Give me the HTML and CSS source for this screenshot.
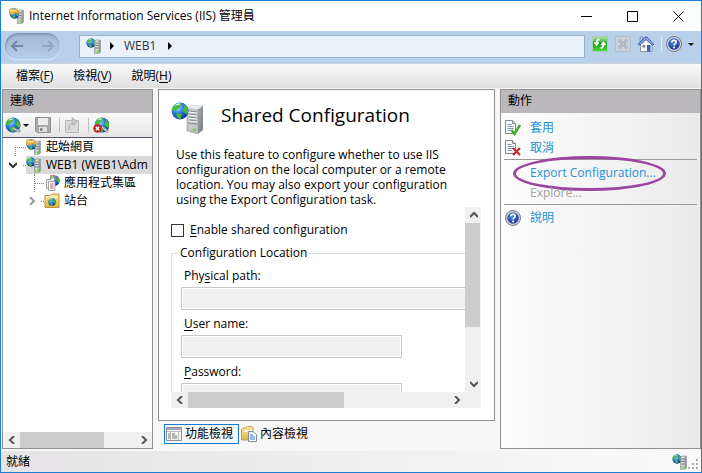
FILE: index.html
```html
<!DOCTYPE html>
<html lang="zh-Hant">
<head>
<meta charset="utf-8">
<title>Internet Information Services (IIS) 管理員</title>
<link rel="stylesheet" href="styles.css">
</head>
<body>
<svg class="defs" aria-hidden="true">
  <defs>
    <linearGradient id="tower" x1="0" x2="1"><stop offset="0" stop-color="#9da3a6"/><stop offset=".4" stop-color="#e4e6e6"/><stop offset="1" stop-color="#8c9295"/></linearGradient>
    <radialGradient id="sea" cx=".35" cy=".3" r=".75"><stop offset="0" stop-color="#a9e0ff"/><stop offset=".45" stop-color="#2f7fe0"/><stop offset="1" stop-color="#0b2f92"/></radialGradient>
    <radialGradient id="helpfill" cx=".4" cy=".3" r=".8"><stop offset="0" stop-color="#5b8be8"/><stop offset="1" stop-color="#122a8c"/></radialGradient>
    <linearGradient id="green" x1="0" x2="0" y1="0" y2="1"><stop offset="0" stop-color="#b9e8b0"/><stop offset=".5" stop-color="#1fa022"/><stop offset="1" stop-color="#4fe03c"/></linearGradient>
    <linearGradient id="folder" x1="0" x2="0" y1="0" y2="1"><stop offset="0" stop-color="#f9e7a4"/><stop offset="1" stop-color="#e3b545"/></linearGradient>
    <linearGradient id="side" x1="0" x2="1" y1="0" y2="1"><stop offset="0" stop-color="#a4aaac"/><stop offset="1" stop-color="#777d80"/></linearGradient>
  </defs>
  <symbol id="globe" viewBox="0 0 16 16">
    <circle cx="8" cy="8" r="7.5" fill="url(#sea)"/>
    <path d="M2 4Q4 1 8 .8L9.500 2 7.500 3.500 8 5 5.500 6 4.500 8.500 2.500 7.500 1 8Q.6 6 2 4ZM11 2L14 4Q16 8 14.500 11L12.500 10 10 7.500 12 5ZM6 9.500L9.500 11 8.500 15 6 14.500 4.500 11Z" fill="#48b840"/>
    <path d="M4 3Q6 1.500 8 2" stroke="#e3fff0" fill="none"/>
  </symbol>
  <symbol id="server" viewBox="0 0 16 16">
    <svg x="0" y="0" width="10" height="10"><use href="#globe"/></svg>
    <path d="M8.500 3.500L10 2H14.500V14L13 15.500H8.500Z" fill="url(#tower)" stroke="#8b9295" stroke-width=".6"/>
    <path d="M13.200 3.500V15" stroke="#80878a" stroke-width=".6"/>
    <path d="M9.500 5H12.500M9.500 7.500H12.500M9.500 10H12.500" stroke="#6b7275" stroke-width=".9"/>
    <rect x="10.500" y="12.500" width="2.500" height="2" fill="#71d51f"/>
  </symbol>
  <symbol id="server-large" viewBox="0 0 32 32">
    <path d="M16 6L20 4H32L27 7V32L16 29Z" fill="#c3c7c8" stroke="#8b9194" stroke-width=".6"/>
    <path d="M27 7L32 4V28L27 32Z" fill="url(#side)"/>
    <path d="M16 6L20 4H32L27 7Z" fill="#eceeee"/>
    <path d="M17 9L26 10M17 12L26 13M17 15L26 16M17 18L26 19M17 21L26 22" stroke="#848b8f"/>
    <path d="M17 10L26 11M17 13L26 14M17 16L26 17M17 19L26 20" stroke="#f6f7f7"/>
    <rect x="22" y="27" width="3" height="2.500" fill="#65d42c"/>
    <svg x="0" y="0" width="18" height="18"><use href="#globe"/></svg>
  </symbol>
  <symbol id="home-server" viewBox="0 0 16 16">
    <use href="#server"/>
    <svg x="1" y="2" width="9" height="9"><use href="#globe"/></svg>
    <path d="M0 1.500L3 .5 4.500 2 8.500 .8 9.500 5.500 6 4.500 3 6.500 1 6Z" fill="#f4b93c" stroke="#d69322" stroke-width=".5"/>
    <path d="M1.500 2.500L4 3 7.500 2" stroke="#fff2ba" fill="none"/>
  </symbol>
  <symbol id="help" viewBox="0 0 16 16">
    <circle cx="8" cy="8" r="7.500" fill="#d5d7db" stroke="#74787f"/>
    <circle cx="8" cy="8" r="5.800" fill="url(#helpfill)"/>
    <path d="M5.800 6.300Q5.900 4.200 8.100 4.200 10.300 4.300 10.200 6.100 10.100 7.200 8.900 7.900 8.100 8.400 8.100 9.500" fill="none" stroke="#fff" stroke-width="1.600"/>
    <circle cx="8.100" cy="11.500" r="1" fill="#fff"/>
  </symbol>
  <symbol id="page" viewBox="0 0 16 16">
    <path d="M.5 .5H7.500L10.500 3.500V13.500H.5Z" fill="#fbfcff" stroke="#84888f"/>
    <path d="M7.500 .5V3.500H10.500" fill="#ddd" stroke="#84888f"/>
    <path d="M2.500 4.500H6.500M2.500 6.500H8.500M2.500 8.500H8.500M2.500 10.500H7" stroke="#7f94b8"/>
  </symbol>
  <symbol id="chevron" viewBox="0 0 8 8"><path d="M2 0L6 4 2 8" fill="none" stroke="currentColor" stroke-width="2"/></symbol>
</svg>

<div class="window">
  <header class="titlebar">
    <svg class="icon"><use href="#home-server"/></svg>
    <h1>Internet Information Services (IIS) 管理員</h1>
    <button class="caption" aria-label="最小化"><svg viewBox="0 0 11 11"><path d="M0 5.500H11"/></svg></button>
    <button class="caption" aria-label="最大化"><svg viewBox="0 0 11 11"><path d="M.5 .5H10.500V10.500H.5Z"/></svg></button>
    <button class="caption" aria-label="關閉"><svg viewBox="0 0 11 11"><path d="M.5 .5L10.500 10.500M10.500 .5L.5 10.500"/></svg></button>
  </header>

  <nav class="navbar">
    <div class="travel">
      <button aria-label="上一頁"><svg viewBox="0 0 12 12"><path d="M12 6H1M6 1L1 6 6 11" stroke="#7689a3"/></svg></button>
      <button aria-label="下一頁"><svg viewBox="0 0 12 12"><path d="M0 6H11M6 1L11 6 6 11" stroke="#8fa7c4"/></svg></button>
    </div>
    <div class="address">
      <svg class="icon"><use href="#server"/></svg>
      <svg class="tri" viewBox="0 0 4 8"><path d="M0 0L4 4 0 8Z"/></svg>
      <a href="#">WEB1</a>
      <svg class="tri" viewBox="0 0 4 8"><path d="M0 0L4 4 0 8Z"/></svg>
    </div>
    <div class="navtools">
      <button aria-label="重新整理"><svg viewBox="0 0 16 16"><rect x=".5" y=".5" width="15" height="15" fill="url(#green)" stroke="#a9cfa9"/><path d="M7.500 3.500Q4.500 3.500 4.500 8M2.500 6.500L4.500 9 6.500 6.500M8.500 12Q11.500 12 11.500 7.500M9.500 9L11.500 6.500 13.500 9" fill="none" stroke="#fff" stroke-width="1.600"/></svg></button>
      <button aria-label="停止" disabled><svg viewBox="0 0 16 16"><rect x=".5" y=".5" width="15" height="15" rx="1" fill="#c9d1da" stroke="#b4bdc8"/><path d="M4 4L12 12M12 4L4 12" stroke="#a3acb7" stroke-width="2.600"/><path d="M4 4L12 12M12 4L4 12" stroke="#c4ccd5"/></svg></button>
      <button aria-label="首頁"><svg viewBox="0 0 16 16"><path d="M2.500 8V15.500H14V8L8 3Z" fill="#f5f5f3" stroke="#8a93a3"/><path d="M2 1H4.500V5L2 7Z" fill="#b9c6dc" stroke="#5b75ad" stroke-width=".6"/><path d="M0 8.500L7 1 9 1 16 8.500 14 9 8 3.500 2 9Z" fill="#8fa9dc" stroke="#2846ad" stroke-width=".8"/><rect x="9" y="9" width="3.500" height="6.500" fill="#3b65aa"/><rect x="4.500" y="9" width="2.500" height="2.500" fill="#6d7e9c"/></svg></button>
      <span class="divider"></span>
      <button class="helpmenu" aria-label="說明"><svg><use href="#help"/></svg><i class="caret"></i></button>
    </div>
  </nav>

  <nav class="menubar">
    <button>檔案(<u>F</u>)</button>
    <button>檢視(<u>V</u>)</button>
    <button>說明(<u>H</u>)</button>
  </nav>

  <main class="workspace">
    <aside class="panel connections">
      <h2>連線</h2>
      <div class="toolbar">
        <button class="connect" aria-label="連線"><svg viewBox="0 0 16 16"><svg width="12" height="12"><use href="#globe"/></svg><path d="M8 11L12 14M12 12L15 15" stroke="#8b9695" stroke-width="3"/><path d="M8 11L15 15" stroke="#cbd4cf"/></svg><i class="caret"></i></button>
        <button aria-label="儲存" disabled><svg viewBox="0 0 16 16"><path d="M.5 .5H15.500V15.500H2L.5 14V.5Z" fill="#a9a9a9" stroke="#929292"/><rect x="3" y="1" width="10" height="7" fill="#ececec"/><rect x="4" y="10" width="8" height="5" fill="#e0e0e0"/><rect x="5" y="11" width="2.500" height="3" fill="#888"/></svg></button>
        <span class="divider"></span>
        <button aria-label="上移" disabled><svg viewBox="0 0 16 16"><path d="M1.500 3.500H14.500V15.500H1.500Z" fill="#dadada" stroke="#b8b8b8"/><path d="M5 13Q4 7 9 6V8.500L13 4.500 8 .5 8.500 3.500" fill="#cacaca" stroke="#aaa"/></svg></button>
        <span class="divider"></span>
        <button aria-label="中斷連線"><svg viewBox="0 0 16 16"><svg x="1" width="12" height="12"><use href="#globe"/></svg><path d="M9 10L15 15" stroke="#8b9695" stroke-width="3"/><path d="M9 10L15 15" stroke="#d8dfda"/><circle cx="4.500" cy="11.500" r="4.200" fill="#c61f22"/><path d="M2.800 9.800L6.200 13.200M6.200 9.800L2.800 13.200" stroke="#fff" stroke-width="1.400"/></svg></button>
      </div>
      <ul class="tree">
        <li><span class="twist"></span><i class="dots corner"></i><svg class="icon"><use href="#home-server"/></svg><a href="#">起始網頁</a></li>
        <li><button class="twist open" aria-label="收合"><svg><use href="#chevron"/></svg></button><i class="dots"></i><span class="node"><svg class="icon"><use href="#server"/></svg><a href="#">WEB1 (WEB1\Adm</a></span></li>
        <li class="child"><span class="twist"></span><i class="dots stem"></i><svg class="icon" viewBox="0 0 16 16"><svg x="5" y="0" width="11" height="11"><use href="#globe"/></svg><path d="M6 1Q12-1 14 6" fill="none" stroke="#c7596b"/><path d="M2.500 4.500H7V2.500H10.500V11.500H8.500V13.500H2.500Z" fill="#edf2f7" stroke="#83888e" stroke-width=".8"/><path d="M4.500 6.500H11V15.500H4.500Z" fill="#fff" stroke="#8b8e94" stroke-width=".8"/><path d="M6 9H9.500M6 11H9.500M6 13H9.500" stroke="#c65757"/></svg><a href="#">應用程式集區</a></li>
        <li class="child"><button class="twist closed" aria-label="展開"><svg><use href="#chevron"/></svg></button><i class="dots"></i><svg class="icon" viewBox="0 0 16 16"><path d="M1 2.500H6L7.500 1H15V14.500H1Z" fill="url(#folder)" stroke="#bf9438"/><path d="M2 4H14" stroke="#fff6cc"/><svg x="4" y="5" width="8" height="8"><use href="#globe"/></svg></svg><a href="#">站台</a></li>
      </ul>
      <div class="hscroll left">
        <button aria-label="向左捲動"><svg class="flip"><use href="#chevron"/></svg></button><span class="track"><span class="thumb"></span></span><button aria-label="向右捲動"><svg><use href="#chevron"/></svg></button>
      </div>
    </aside>

    <section class="center">
      <div class="panel feature">
        <div class="heading"><svg><use href="#server-large"/></svg><h2>Shared Configuration</h2></div>
        <p>Use this feature to configure whether to use IIS configuration on the local computer or a remote location. You may also export your configuration using the Export Configuration task.</p>
        <div class="scroller">
          <form class="view">
            <div class="check"><input type="checkbox" id="enable"><label for="enable"><u>E</u>nable shared configuration</label></div>
            <fieldset>
              <legend>Configuration Location</legend>
              <label for="path">Phy<u>s</u>ical path:</label>
              <input class="wide" type="text" id="path" disabled>
              <label for="user"><u>U</u>ser name:</label>
              <input type="text" id="user" disabled>
              <label for="pass"><u>P</u>assword:</label>
              <input type="password" id="pass" disabled>
            </fieldset>
          </form>
          <div class="vscroll"><button aria-label="向上捲動"><svg class="up"><use href="#chevron"/></svg></button><span class="track"><span class="thumb"></span></span><button aria-label="向下捲動"><svg class="down"><use href="#chevron"/></svg></button></div>
          <div class="hscroll"><button aria-label="向左捲動"><svg class="flip"><use href="#chevron"/></svg></button><span class="track"><span class="thumb"></span></span><button aria-label="向右捲動"><svg><use href="#chevron"/></svg></button></div>
          <span class="corner-fill"></span>
        </div>
      </div>
      <div class="tabs">
        <button class="active"><svg viewBox="0 0 16 16"><path d="M.5 1.500H15.500V14.500H.5Z" fill="#f7f7f2" stroke="#8d9196"/><path d="M1 3H15" stroke="#a2a8b2" stroke-width="2"/><path d="M1 5.500H15M4.500 5V14M12.500 5V14" stroke="#b9bbbd"/><path d="M2 8H4M2 10H4M2 12H4M6 8H9M6 10H11M6 12H11" stroke="#777"/></svg>功能檢視</button>
        <button><svg viewBox="0 0 16 16"><path d="M.5 14V3.500L2 2H5L6 .5H11L12 2V14Z" fill="url(#folder)" stroke="#c3a05a"/><path d="M3 5H12" stroke="#fff6d6" stroke-width="2"/><path d="M7.500 5.500H12L15.500 8.500V15.500H7.500Z" fill="#f4f8ff" stroke="#7d8b9f"/><path d="M9 9H12M9 11H14M9 13H14" stroke="#3e77b9"/></svg>內容檢視</button>
      </div>
    </section>

    <aside class="panel actions">
      <h2>動作</h2>
      <ul>
        <li><svg class="icon" viewBox="0 0 16 16"><use href="#page"/><path d="M6.500 10L9.500 14 15 5" fill="none" stroke="#38ae22" stroke-width="2.400"/></svg><a href="#">套用</a></li>
        <li><svg class="icon" viewBox="0 0 16 16"><use href="#page"/><path d="M8 8L15 15M15 8L8 15" stroke="#d22020" stroke-width="2"/></svg><a href="#">取消</a></li>
      </ul>
      <ul>
        <li class="circled"><span class="icon"></span><a href="#">Export Configuration...</a></li>
        <li class="disabled"><span class="icon"></span><a>Explore...</a></li>
      </ul>
      <ul>
        <li><svg class="icon"><use href="#help"/></svg><a href="#">說明</a></li>
      </ul>
    </aside>
  </main>

  <footer class="statusbar"><span>就緒</span><svg class="icon"><use href="#server"/></svg><svg class="grip" viewBox="0 0 10 10"><path d="M8 0h2v2h-2zM4 4h2v2h-2zM8 4h2v2h-2zM0 8h2v2h-2zM4 8h2v2h-2zM8 8h2v2h-2z" fill="#b1b1b1"/></svg></footer>
</div>
</body>
</html>
```
FILE: styles.css
```css
*, *::after { box-sizing: border-box; }
body {
  margin: 0;
  font: 12px/16px "Open Sans", "Noto Sans CJK TC", sans-serif;
  color: #000;
}
h1, h2, p, ul { margin: 0; padding: 0; font-size: 12px; font-weight: 400; }
ul { list-style: none; }
a { color: inherit; text-decoration: none; }
button { margin: 0; padding: 0; border: 0; background: none; font: inherit; color: inherit; }
svg { display: block; flex: none; }
.defs { position: absolute; width: 0; height: 0; }
.icon { width: 16px; height: 16px; flex: none; }
.caret { border: 3px solid transparent; border-top-color: #111; border-bottom: 0; }

.window {
  display: flex;
  flex-direction: column;
  min-height: 100vh;
  border: 1px solid #1c7fd2;
  background: #f7f7f7;
}

.titlebar { display: flex; align-items: center; height: 30px; padding-left: 8px; background: #fff; }
.titlebar h1 { flex: 1; padding-left: 4px; }
.caption { width: 46px; height: 30px; display: grid; place-items: center; }
.caption svg { width: 11px; height: 11px; fill: none; stroke: #000; }

.navbar { display: flex; align-items: center; height: 33px; padding: 0 7px 2px 4px; background: #b9d0ea; border-bottom: 1px solid #c9d3df; }
.travel {
  display: flex;
  justify-content: space-between;
  align-items: center;
  width: 55px;
  height: 26px;
  padding: 0 6px;
  border-radius: 13px;
  background: linear-gradient(#a0b8d4, #b7cde7);
  box-shadow: inset 1px 2px 2px #8298b3, 0 1px 2px #d8e7f7;
}
.travel svg { width: 12px; height: 12px; fill: none; stroke-width: 2; }
.address {
  flex: 1;
  display: flex;
  align-items: center;
  gap: 8px;
  height: 23px;
  margin: 0 7px 0 19px;
  padding-left: 6px;
  border: 1px solid #96b2d0;
  background: #e9f1fa;
}
.address a { padding: 0 4px 0 2px; color: #2c3446; }
.tri { width: 4px; height: 8px; }
.navtools { display: flex; align-items: center; gap: 7px; padding-bottom: 4px; }
.navtools svg { width: 16px; height: 16px; }
.divider { width: 1px; height: 14px; background: #d8d8d8; }
.helpmenu { display: flex; align-items: center; gap: 6px; }
.navtools .divider { background: #e9eef5; }
.navtools .helpmenu { margin-left: -3px; }

.menubar { display: flex; gap: 20px; height: 24px; padding: 0 15px; background: linear-gradient(#fafafa, #e1e0e1); }
.menubar u, .view u { text-underline-offset: 2px; }

.workspace {
  flex: 1;
  display: grid;
  grid-template-columns: 151px minmax(0, 1fr) 201px;
  gap: 5px;
  padding: 1px 0 2px 1px;
}
.panel { border: 1px solid #919191; background: #fff; }
.panel > h2 { height: 23px; padding: 3px 7px; background: #bbb8bc; }

.connections { display: flex; flex-direction: column; min-width: 0; }
.toolbar {
  display: flex;
  align-items: center;
  gap: 6px;
  height: 25px;
  padding-left: 2px;
  background: linear-gradient(#fafafa, #e5e4e6);
  border-bottom: 1px solid #55506a;
}
.toolbar svg { width: 16px; height: 16px; }
.toolbar .divider { margin: 0 -2px 0 2px; background: #bdbdbd; }
.connect { display: flex; align-items: center; gap: 2px; }

.tree { flex: 1; overflow: hidden; }
.tree li { display: flex; align-items: center; height: 18px; white-space: nowrap; }
.tree a { padding-left: 4px; }
.tree .node { display: flex; flex: 1; min-width: 0; background: #d9d9d9; height: 18px; align-items: center; }
.twist { flex: none; width: 20px; height: 16px; display: grid; place-items: center; }
.twist svg { width: 8px; height: 8px; }
.open svg { transform: rotate(90deg); color: #333; }
.closed svg { color: #999; }
.child { padding-left: 19px; }
.dots { flex: none; width: 3px; height: 1px; border-top: 1px dotted #888; }
.tree .child .twist { width: 19px; }
.corner { width: 11px; height: 9px; margin: 9px 0 0 -8px; border-left: 1px dotted #888; }
.child .stem { width: 10px; height: 18px; margin-left: -7px; border: 0; border-left: 1px dotted #888; background: repeating-linear-gradient(90deg, #888 0 1px, transparent 1px 2px) 0 9px / 100% 1px no-repeat; }

.hscroll, .vscroll { display: flex; background: #f0f0f0; color: #555; }
.hscroll { height: 16px; }
.vscroll { flex-direction: column; width: 16px; }
.hscroll button, .vscroll button { width: 17px; height: 16px; display: grid; place-items: center; }
.hscroll svg, .vscroll svg { width: 8px; height: 8px; }
.flip { transform: scaleX(-1); }
.up { transform: rotate(-90deg); }
.down { transform: rotate(90deg); }
.track { flex: 1; display: flex; }
.thumb { width: 60%; background: #cdcdcd; }
.vscroll .thumb { width: 15px; height: 68%; }
.hscroll.left .thumb { width: 73%; }

.center { display: flex; flex-direction: column; min-width: 0; }
.feature { flex: 1; display: flex; flex-direction: column; padding: 11px 12px 12px; }
.heading { display: flex; align-items: center; gap: 18px; height: 34px; }
.heading svg { width: 32px; height: 32px; }
.heading h2 { font-size: 19px; line-height: 28px; padding-bottom: 6px; }
.feature p { padding: 12px 4px 0 5px; line-height: 15px; }
.scroller {
  flex: 1;
  display: grid;
  grid-template: minmax(0, 1fr) 16px / minmax(0, 1fr) 16px;
  min-height: 200px;
  width: calc(100% - 1px);
}
.view { height: 0; min-height: 100%; overflow: hidden; padding-top: 14px; white-space: nowrap; }
.corner-fill { background: #f0f0f0; }
.check { display: flex; align-items: center; gap: 6px; height: 18px; }
.check input { appearance: none; width: 13px; height: 13px; margin: 0; border: 1px solid #333; background: #fff; }
fieldset { width: 400px; margin: 6px 0 0; padding: 7px 9px; border: 1px solid #dcdcdc; min-width: 0; }
legend { padding: 0 2px; margin-left: -3px; }
fieldset label { display: block; padding-left: 3px; }
fieldset input { display: block; width: 221px; height: 23px; margin: 3px 0 6px; border: 1px solid #c8c8c8; background: #f0f0f0; box-shadow: inset 0 0 0 1px #fff; }
fieldset .wide { width: 360px; }
.tabs { display: flex; height: 28px; padding: 3px 0 5px 6px; }
.tabs button { display: flex; align-items: center; gap: 3px; height: 20px; padding: 0 5px 0 1px; border: 1px solid transparent; }
.tabs .active { border-color: #0f79d0; }
.tabs svg { width: 16px; height: 16px; }

.actions { background: linear-gradient(90deg, #fdfdfd, #ebebeb); }
.actions > h2 { margin-bottom: 5px; }
.actions ul { margin: 0 3px; padding-bottom: 1px; }
.actions ul + ul { border-top: 1px solid #9a9a9a; padding-top: 3px; }
.actions li { display: flex; align-items: center; gap: 9px; height: 20px; padding-left: 1px; color: #2590d5; position: relative; }
.actions .disabled { color: #a2a2a2; }
.circled::after { content: ""; position: absolute; left: 9px; top: -7px; width: 153px; height: 35px; border: 3px solid #9c46a1; border-radius: 50%; pointer-events: none; }

.statusbar { display: flex; align-items: center; height: 21px; padding: 0 3px 0 5px; background: linear-gradient(90deg, #e5e3e5, #fbfbfb); }
.statusbar span { flex: 1; }
.grip { width: 10px; height: 10px; align-self: flex-end; margin-bottom: 3px; }
```
